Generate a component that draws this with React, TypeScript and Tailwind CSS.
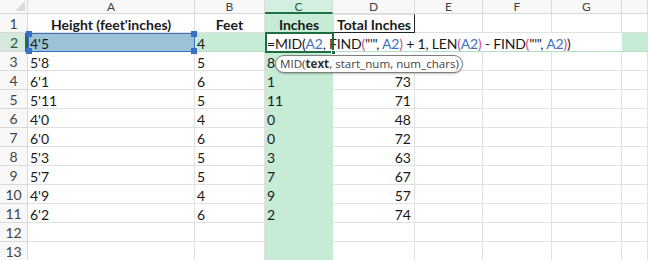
import React from 'react';

const rows = [
  { a: "5'8", b: '5', c: '8', d: '' },
  { a: "6'1", b: '6', c: '1', d: '73' },
  { a: "5'11", b: '5', c: '11', d: '71' },
  { a: "4'0", b: '4', c: '0', d: '48' },
  { a: "6'0", b: '6', c: '0', d: '72' },
  { a: "5'3", b: '5', c: '3', d: '63' },
  { a: "5'7", b: '5', c: '7', d: '67' },
  { a: "4'9", b: '4', c: '9', d: '57' },
  { a: "6'2", b: '6', c: '2', d: '74' },
];

const cell = 'h-[19px] border-r border-b border-[#e1e1e1] flex items-center pt-[2px] px-[2px] overflow-hidden whitespace-nowrap';
const rowHead = 'h-[19px] border-r border-b border-[#d9d9d9] bg-[#f8f8f8] flex items-center justify-center pt-[1px] text-[14px] text-[#444]';
const greenCol = 'h-[19px] bg-[#c6ecd6] flex items-center pt-[2px] px-[2px] whitespace-nowrap';
const colHead = 'h-[14px] border-r border-b border-[#d9d9d9] bg-[#f8f8f8] flex items-center justify-center text-[12px] text-[#444] leading-[12px]';

const Pink = ({ children }: { children: React.ReactNode }) => <span className="text-[#e0457b]">{children}</span>;
const Blue = ({ children }: { children: React.ReactNode }) => <span className="text-[#3d6fc2]">{children}</span>;

function Handle({ pos }: { pos: string }) {
  return <div className={`absolute w-[6px] h-[6px] bg-[#3a6fc8] ${pos}`} />;
}

export default function App() {
  return (
    <div className="relative w-[648px] h-[260px] overflow-hidden bg-white font-[Lato,sans-serif] text-[14px] text-[#1a1a1a]">
      <div className="grid grid-cols-[28px_167px_70px_68px_82px_68px_69px_70px_1fr]">
        {/* column headers */}
        <div className="h-[14px] border-r border-b border-[#d9d9d9] bg-[#f8f8f8] relative">
          <svg className="absolute right-[2px] bottom-[2px]" width="10" height="10" viewBox="0 0 10 10">
            <polygon points="10,0 10,10 0,10" fill="#dadada" />
          </svg>
        </div>
        {['A', 'B'].map(l => (
          <div key={l} className={colHead}>{l}</div>
        ))}
        <div className="h-[14px] border-r border-[#d9d9d9] bg-[#d3efdf] border-b-2 border-b-[#1e7145] flex items-center justify-center text-[12px] text-[#1d5e37] leading-[11px]">C</div>
        {['D', 'E', 'F', 'G', ''].map((l, i) => (
          <div key={i} className={colHead}>{l}</div>
        ))}

        {/* row 1 */}
        <div className={rowHead}>1</div>
        <div className={`${cell} justify-center font-bold`}>Height (feet'inches)</div>
        <div className={`${cell} justify-center font-bold`}>Feet</div>
        <div className={`${greenCol} justify-center font-bold`}>Inches</div>
        <div className={`${cell} justify-center font-bold border border-[#222] border-r-[#222] border-b-[#222]`}>Total Inches</div>
        <div className={cell} />
        <div className={cell} />
        <div className={cell} />
        <div className={cell} />

        {/* row 2 */}
        <div className="h-[19px] relative border-b border-[#d9d9d9] bg-[#d6e8dd] flex items-center justify-center pt-[1px] text-[14px] text-[#1d5e37]">
          2
          <div className="absolute right-0 top-0 bottom-[-1px] w-[3px] bg-[#1e7145]" />
        </div>
        <div className="h-[19px] relative bg-[#9cc3d5] border-[1.5px] border-[#3a6fc8] flex items-center pt-[2px] px-[1px]">
          4'5
          <Handle pos="left-[-3px] top-[-3px]" />
          <Handle pos="right-[-3px] top-[-3px]" />
          <Handle pos="left-[-3px] bottom-[-3px]" />
          <Handle pos="right-[-3px] bottom-[-3px]" />
        </div>
        <div className="h-[19px] bg-[#c6ecd6] border-b border-[#b5dcc4] flex items-center pt-[2px] px-[2px]">4</div>
        <div className="col-span-5 h-[19px] relative bg-white border-b border-[#b5dcc4] flex items-center pt-[2px] px-[2px] whitespace-nowrap overflow-visible tracking-[-0.2px]">
          <span>
            =MID(<Blue>A2</Blue>, FIND<Pink>(</Pink>"'", <Blue>A2</Blue><Pink>)</Pink> + 1, LEN<Pink>(</Pink><Blue>A2</Blue><Pink>)</Pink> - FIND<Pink>(</Pink>"'", <Blue>A2</Blue><Pink>)</Pink>)
          </span>
          <div className="absolute left-0 top-[-1px] w-[69px] h-[21px] border-2 border-[#1e6e42]" />
          <div className="absolute left-[66px] top-[17px] w-[5px] h-[5px] bg-[#1e6e42] border border-white" />
        </div>
        <div className="h-[19px] bg-[#c6ecd6] border-b border-[#b5dcc4]" />

        {/* rows 3.. */}
        {rows.map((r, i) => (
          <React.Fragment key={i}>
            <div className={rowHead}>{i + 3}</div>
            <div className={cell}>{r.a}</div>
            <div className={cell}>{r.b}</div>
            <div className={greenCol}>{r.c}</div>
            <div className={`${cell} justify-end pr-[3px]`}>{r.d}</div>
            <div className={cell} />
            <div className={cell} />
            <div className={cell} />
            <div className={cell} />
          </React.Fragment>
        ))}
        {[12, 13].map(n => (
          <React.Fragment key={n}>
            <div className={rowHead}>{n}</div>
            <div className={cell} />
            <div className={cell} />
            <div className={greenCol} />
            <div className={cell} />
            <div className={cell} />
            <div className={cell} />
            <div className={cell} />
            <div className={cell} />
          </React.Fragment>
        ))}
      </div>

      {/* function tooltip */}
      <div className="absolute left-[275px] top-[55px] w-[188px] h-[18px] rounded-full border-[1.5px] border-[#7f7f7f] bg-white shadow-[0_1px_2px_rgba(0,0,0,0.25)] flex items-center pl-[4px] text-[11.6px] text-[#444] font-['Open_Sans',sans-serif] leading-none whitespace-nowrap">
        MID(<span className="font-bold text-[#333]">text</span>, start_num, num_chars)
      </div>
    </div>
  );
}
